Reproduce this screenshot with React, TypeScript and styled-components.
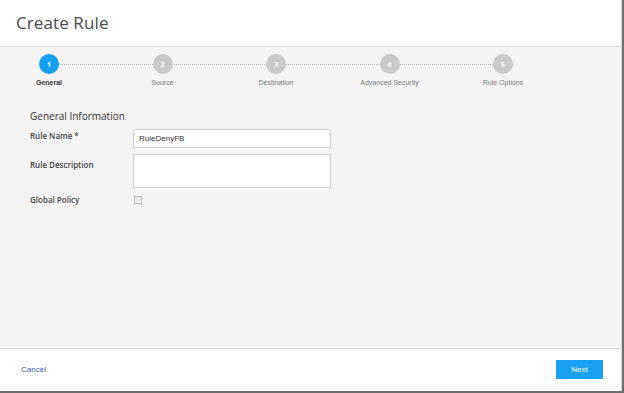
import React from "react";
import styled, { createGlobalStyle } from "styled-components";

const Global = createGlobalStyle`
  html, body { margin: 0; padding: 0; background: #6f6f6f; }
  body { font-family: "Open Sans", "Liberation Sans", Arial, sans-serif; }
  * { box-sizing: border-box; }
`;

const Dialog = styled.div`
  width: 622px;
  height: 391px;
  background: #f4f4f4;
  border-right: 1px solid #dcdcdc;
  display: flex;
  flex-direction: column;
`;

const Header = styled.header`
  height: 47px;
  flex: none;
  background: #fff;
  border-bottom: 1px solid #d9d9d9;
  display: flex;
  align-items: center;
  padding-left: 16px;
  padding-bottom: 2px;
`;

const Title = styled.h1`
  margin: 0;
  font-size: 17px;
  font-weight: 400;
  color: #4a4a4a;
  letter-spacing: 0.1px;
`;

const Body = styled.main`
  flex: 1;
  display: flex;
  flex-direction: column;
`;

const Track = styled.div`
  position: relative;
  display: flex;
  gap: 33.5px;
  padding: 7px 0 0 9px;
  &::before {
    content: "";
    position: absolute;
    left: 49px;
    width: 454px;
    top: 16.5px;
    border-top: 1px dotted #b5b5b5;
  }
`;

const Step = styled.div`
  position: relative;
  width: 80px;
  display: flex;
  flex-direction: column;
  align-items: center;
  gap: 5px;
`;

const Circle = styled.div<{ $active?: boolean }>`
  width: 20px;
  height: 20px;
  border-radius: 50%;
  background: ${(p) => (p.$active ? "#169ff0" : "#c9c9c9")};
  color: #fff;
  font-size: 7px;
  font-weight: 700;
  display: flex;
  align-items: center;
  justify-content: center;
`;

const StepLabel = styled.div<{ $active?: boolean }>`
  font-family: "Liberation Sans", Arial, sans-serif;
  font-size: 7px;
  color: ${(p) => (p.$active ? "#333" : "#777")};
  font-weight: ${(p) => (p.$active ? 700 : 400)};
  white-space: nowrap;
`;

const Form = styled.section`
  padding: 23px 0 0 30px;
  display: flex;
  flex-direction: column;
`;

const SectionTitle = styled.h2`
  margin: 0 0 6px;
  font-size: 10px;
  font-weight: 400;
  color: #333;
`;

const Row = styled.div<{ $h: number; $mb: number }>`
  display: grid;
  grid-template-columns: 103px 198px;
  align-items: start;
  min-height: ${(p) => p.$h}px;
  margin-bottom: ${(p) => p.$mb}px;
`;

const Label = styled.label<{ $pt: number }>`
  font-size: 8px;
  font-weight: 600;
  color: #444;
  padding-top: ${(p) => p.$pt}px;
`;

const Input = styled.div`
  height: 19px;
  background: #fff;
  border: 1px solid #cfcfcf;
  font-family: "Liberation Sans", Arial, sans-serif;
  font-size: 8px;
  color: #333;
  display: flex;
  align-items: center;
  padding-left: 5px;
`;

const TextArea = styled.div`
  height: 34px;
  background: #fff;
  border: 1px solid #cfcfcf;
`;

const Check = styled.div`
  margin: 2px 0 0 1px;
  width: 8px;
  height: 8px;
  border: 1px solid #b9b9b9;
  background: linear-gradient(#e8e8e8, #f7f7f7);
`;

const Footer = styled.footer`
  height: 43px;
  flex: none;
  background: #fff;
  border-top: 1px solid #d9d9d9;
  display: flex;
  align-items: center;
  justify-content: space-between;
  padding: 0 18px 1px 21px;
`;

const Cancel = styled.a`
  font-family: "Liberation Sans", Arial, sans-serif;
  font-size: 8px;
  color: #3b5aa6;
  cursor: pointer;
`;

const NextButton = styled.button`
  width: 47px;
  height: 19px;
  border: none;
  background: #18a1f2;
  color: #fff;
  font-family: "Liberation Sans", Arial, sans-serif;
  font-size: 8px;
  padding: 0;
`;

const steps = ["General", "Source", "Destination", "Advanced Security", "Rule Options"];

export default function App() {
  return (
    <>
      <Global />
      <Dialog>
        <Header>
          <Title>Create Rule</Title>
        </Header>
        <Body>
          <Track>
            {steps.map((s, i) => (
              <Step key={s}>
                <Circle $active={i === 0}>{i + 1}</Circle>
                <StepLabel $active={i === 0}>{s}</StepLabel>
              </Step>
            ))}
          </Track>
          <Form>
            <SectionTitle>General Information</SectionTitle>
            <Row $h={19} $mb={6}>
              <Label $pt={1}>Rule Name *</Label>
              <Input>RuleDenyFB</Input>
            </Row>
            <Row $h={34} $mb={6}>
              <Label $pt={5}>Rule Description</Label>
              <TextArea />
            </Row>
            <Row $h={10} $mb={0}>
              <Label $pt={0}>Global Policy</Label>
              <Check />
            </Row>
          </Form>
        </Body>
        <Footer>
          <Cancel>Cancel</Cancel>
          <NextButton>Next</NextButton>
        </Footer>
      </Dialog>
    </>
  );
}
